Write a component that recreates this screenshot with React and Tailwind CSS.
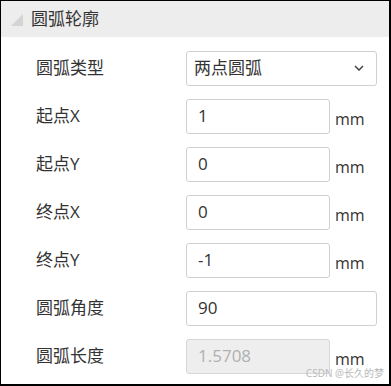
import React from "react";

const rows = [
  { label: "圆弧类型", type: "select", value: "两点圆弧" },
  { label: "起点X", value: "1", unit: "mm" },
  { label: "起点Y", value: "0", unit: "mm" },
  { label: "终点X", value: "0", unit: "mm" },
  { label: "终点Y", value: "-1", unit: "mm" },
  { label: "圆弧角度", value: "90", wide: true },
  { label: "圆弧长度", value: "1.5708", unit: "mm", disabled: true },
];

const App = () => {
  return (
    <div
      className="relative w-[391px] h-[386px] bg-white border-l border-t border-r-2 border-b-2 border-black overflow-hidden"
      style={{ fontFamily: '"Open Sans", "Noto Sans CJK SC", sans-serif' }}
    >
      {/* Header */}
      <div className="h-[36px] bg-[#ededed] flex items-center pl-[9px]">
        <svg width="14" height="14" viewBox="0 0 14 14" className="mr-[7px] mt-[2px]">
          <polygon points="13,1 13,13 1,13" fill="#d4d4d4" />
        </svg>
        <span className="text-[17px] text-[#333]">圆弧轮廓</span>
      </div>

      {/* Rows */}
      <div className="pt-[7px]">
        {rows.map((row) => (
          <div key={row.label} className="h-[48px] flex items-center">
            <div className="w-[185px] pl-[35px] text-[17px] text-[#333]">{row.label}</div>
            {row.type === "select" ? (
              <div className="w-[191px] h-[35px] border border-[#d0d0d0] rounded-[3px] flex items-center justify-between pl-[7px] pr-[12px] text-[17px] text-[#333]">
                <span>{row.value}</span>
                <svg width="10" height="6" viewBox="0 0 10 6">
                  <path d="M1 1 L5 5 L9 1" fill="none" stroke="#444" strokeWidth="1.5" />
                </svg>
              </div>
            ) : (
              <div className="flex items-center">
                <div
                  className={`${row.wide ? "w-[191px]" : "w-[144px]"} h-[35px] border rounded-[3px] flex items-center pl-[11px] text-[17px] ${
                    row.disabled
                      ? "bg-[#eeeeee] border-[#d6d6d6] text-[#b0b0b0]"
                      : "bg-white border-[#d0d0d0] text-[#333]"
                  }`}
                >
                  {row.value}
                </div>
                {row.unit && (
                  <span className="ml-[5px] mt-[5px] text-[16px] text-[#333] leading-none">{row.unit}</span>
                )}
              </div>
            )}
          </div>
        ))}
      </div>

      <div className="absolute right-[5px] bottom-[6px] text-[10px] text-[#b8b8b8] leading-none">
        CSDN @长久的梦
      </div>
    </div>
  );
};

export default App;
